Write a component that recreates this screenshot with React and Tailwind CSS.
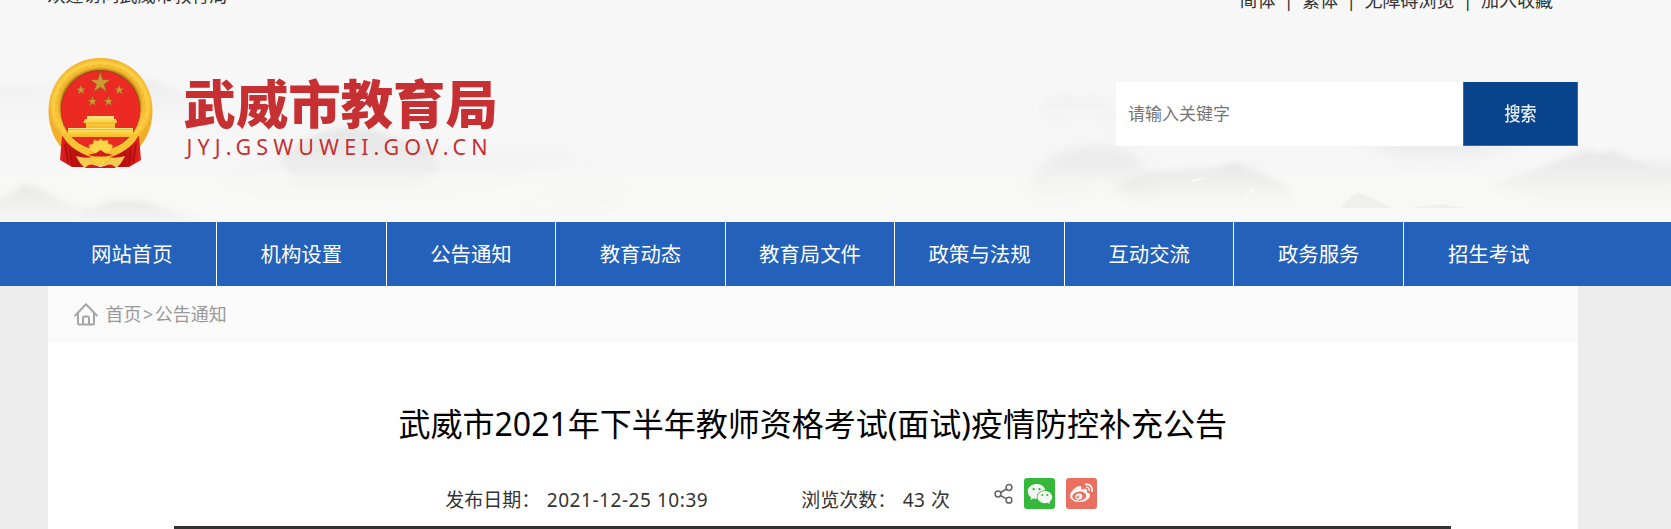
import React from 'react';
import { AiFillWechat } from 'react-icons/ai';
import { FaWeibo } from 'react-icons/fa';

const navItems = [
  '网站首页',
  '机构设置',
  '公告通知',
  '教育动态',
  '教育局文件',
  '政策与法规',
  '互动交流',
  '政务服务',
  '招生考试',
];

const topLinks = ['简体', '繁体', '无障碍浏览', '加入收藏'];

const App = () => {
  return (
    <div className="h-[529px] w-full overflow-hidden bg-[#ededed] font-['Noto_Sans','Noto_Sans_CJK_SC',sans-serif] text-[#333]">
      <Header />
      <NavBar />
      <main className="ml-[47.5px] h-[243px] w-[1530.5px] bg-white">
        <Breadcrumb />
        <Article />
      </main>
    </div>
  );
};

const Header = () => (
  <header className="relative h-[222px] overflow-hidden bg-[#f7f7f7]">
    <Mountains />
    <div className="relative ml-[47.5px] w-[1530.5px]">
      {/* Top strip, partly scrolled out of view */}
      <div className="-mt-4 flex h-8 justify-between text-[18px] leading-8">
        <p className="-mt-[5px]">欢迎访问武威市教育局</p>
        <ul className="mr-[25px] flex">
          {topLinks.map((link, index) => (
            <li key={link} className="flex">
              {index > 0 && <span className="w-[26.5px] text-center">|</span>}
              <a>{link}</a>
            </li>
          ))}
        </ul>
      </div>

      <div className="flex items-start justify-between">
        <div className="flex pt-[42px]">
          <Emblem />
          <div className="ml-[31px] pt-[19px] text-[#c73032]">
            <h1 className="text-[52.4px] leading-[54px] font-black whitespace-nowrap">武威市教育局</h1>
            <p className="mt-[3px] ml-[3px] text-[21.5px] leading-[26px] tracking-[5.1px] whitespace-nowrap">
              JYJ.GSWUWEI.GOV.CN
            </p>
          </div>
        </div>

        <form className="mt-[66px] flex h-16">
          <input
            type="text"
            placeholder="请输入关键字"
            className="w-[347px] bg-white px-[12px] text-[17px] outline-none placeholder:text-[#757575]"
          />
          <button
            type="button"
            className="w-[115px] border border-t-0 border-[#3a69a6] bg-[#09438b] text-[16px] font-medium text-[#e4ecf6]"
          >
            <span className="inline-block scale-y-120">搜索</span>
          </button>
        </form>
      </div>
    </div>
  </header>
);

const NavBar = () => (
  <nav className="h-16 bg-[#2461ba] pl-[47.5px]">
    <ul className="flex h-full">
      {navItems.map((item) => (
        <li
          key={item}
          className="flex w-[169.57px] items-center justify-center border-r border-white text-[20.4px] text-white last:border-r-0"
        >
          {item}
        </li>
      ))}
    </ul>
  </nav>
);

const Breadcrumb = () => (
  <div className="flex h-[57px] items-center bg-[#fafafa] pb-[2px] pl-[26px] text-[18px] text-[#999]">
    <HomeIcon />
    <span className="ml-[8px] leading-6">首页</span>
    <span className="mx-[1.5px] leading-6">&gt;</span>
    <span className="leading-6">公告通知</span>
  </div>
);

const Article = () => (
  <article className="flex flex-col items-center pt-[59px]">
    <h2 className="text-[32px] leading-[44px] whitespace-nowrap text-black">
      武威市2021年下半年教师资格考试(面试)疫情防控补充公告
    </h2>
    <div className="mt-[32px] flex h-[51px] w-[1277px] border-b-3 border-[#333] pl-[271px] text-[19px] leading-[44px] whitespace-nowrap">
      <span className="w-[101.5px]">发布日期：</span>
      <span className="w-[254.5px] tracking-[0.55px]">2021-12-25 10:39</span>
      <span className="w-[101.5px]">浏览次数：</span>
      <span className="w-[91.5px] tracking-[0.5px]">43 次</span>
      <div className="flex h-[31px] items-center">
        <ShareIcon />
        <span className="ml-[11px] flex size-[31px] items-center justify-center rounded-[3px] bg-[#35b83c] text-[#f4f6f4]">
          <AiFillWechat size={28} />
        </span>
        <span className="ml-[11px] flex size-[31px] items-center justify-center rounded-[3px] bg-[#ea6f60] text-[#f8f4f3]">
          <FaWeibo size={23} />
        </span>
      </div>
    </div>
  </article>
);

const HomeIcon = () => (
  <svg className="h-[24px] w-[24px]" viewBox="0 0 24 24" fill="none" stroke="#a6a6a6" strokeWidth="2" strokeLinejoin="round" strokeLinecap="round">
    <path d="M1.2 13.5 12 2.2l10.8 11.3" />
    <path d="M4 11.5V21q0 1.6 1.6 1.6h12.8q1.6 0 1.6-1.6v-9.5" />
    <path d="M9 22v-6q0-1.5 1.5-1.5h3q1.5 0 1.5 1.5v6" />
  </svg>
);

const ShareIcon = () => (
  <svg className="h-[21px] w-[19px]" viewBox="0 0 19 21" fill="none" stroke="#666" strokeWidth="1.5">
    <circle cx="4" cy="11" r="2.9" />
    <circle cx="15" cy="4.5" r="2.9" />
    <circle cx="15" cy="17.2" r="2.9" />
    <path d="M6.5 9.5 12.5 6M6.5 12.5l6 3.3" />
  </svg>
);

const Star = ({ x, y, r }) => (
  <path
    transform={`translate(${x} ${y}) scale(${r})`}
    d="M0-1 .23-.31.95-.31.36.12.59.81 0 .38-.59.81-.36.12-.95-.31-.23-.31Z"
    fill="#cf9a34"
    stroke="#96601c"
    strokeWidth="0.08"
  />
);

const Emblem = () => (
  <svg className="h-[111px] w-[105px]" viewBox="0 0 105 111">
    <defs>
      <radialGradient id="ring" cx="0.5" cy="0.5" r="0.5">
        <stop offset="0.74" stopColor="#a9741a" />
        <stop offset="0.8" stopColor="#f0b32c" />
        <stop offset="0.9" stopColor="#fdd143" />
        <stop offset="1" stopColor="#f1ae2b" />
      </radialGradient>
      <linearGradient id="gold" x1="0" y1="0" x2="0" y2="1">
        <stop offset="0" stopColor="#ffe98a" />
        <stop offset="0.5" stopColor="#fdd23e" />
        <stop offset="1" stopColor="#f2b92c" />
      </linearGradient>
      <linearGradient id="drape" x1="0" y1="0" x2="1" y2="0">
        <stop offset="0" stopColor="#e3201d" />
        <stop offset="0.5" stopColor="#b90f10" />
        <stop offset="1" stopColor="#e8221f" />
      </linearGradient>
    </defs>
    {/* Wheat ring */}
    <path d="M52.5 0C82 0 104.500 23 104.500 53c0 18-8 33-19 42H19C8 86 .5 71 .5 53 .5 23 23 0 52.500 0Z" fill="url(#ring)" />
    <circle cx="52.5" cy="52" r="45" fill="none" stroke="#e0a026" strokeWidth="1" strokeDasharray="3 4" opacity="0.5" />
    <circle cx="52.5" cy="52" r="39.5" fill="#ed2924" stroke="#9b3e14" strokeWidth="0.8" />
    <Star x={52.3} y={25} r={11} />
    <Star x={33} y={32} r={5.2} />
    <Star x={71.3} y={32} r={5.2} />
    <Star x={44.5} y={43.5} r={5.2} />
    <Star x={60.5} y={43.5} r={5.2} />
    {/* Gate */}
    <path d="M39 58h27v3h2l1 4h-2v5H38v-5h-3l2-4h2Z" fill="url(#gold)" />
    <path d="M20 70h65v9H20Z" fill="url(#gold)" />
    <path d="M36 65h32M20 71.5h65" stroke="#e1a32c" strokeWidth="0.7" />
    {/* Drapes */}
    <path d="M14 78 34 92 46 97v12H24L12 102Z" fill="url(#drape)" />
    <path d="M91 78 71 92 59 97v12h22l12-7Z" fill="url(#drape)" />
    {/* Lower ring and cogwheel */}
    <path d="M14 76q3-2 6 1 9 11 22 14l4 4h13l4-4q13-3 22-14 3-3 6-1-6 15-28 23l-10 2-10-2Q20 91 14 76Z" fill="#f8c233" />
    <path d="M17 86l3 18M22 91l2 16M88 86l-3 18M83 91l-2 16" stroke="#a80f10" strokeWidth="1.6" />
    <path d="M28 98q10 3 17 1l15 0q7 2 17-1-3 7-9 12l-8-3H45l-8 3q-6-5-9-12Z" fill="#f5cb52" />
    <path d="M42 93l-1-6 4-1 1-4 4 1 2.500-2 3 2 4-1 1 4 4 1-1 6-11 5Z" fill="#fdd548" stroke="#e2a128" strokeWidth="0.5" />
    <path d="M40 97l8-2 4.500-3 4.500 3 8 2-7 1.500H47Z" fill="#d51c1a" />
    <path d="M43 99h19l-1 4-4 2-2 2-3 .5-3-.5-2-2-4-2Z" fill="#fbd03f" stroke="#e2a128" strokeWidth="0.5" />
    <path d="M37 110q4-5 9-3l6.500 2 6.500-2q5-2 9 3Z" fill="#d51c1a" />
  </svg>
);

// Ink-wash mountains behind the header
const Mountains = () => (
  <svg className="absolute inset-0 h-full w-full" viewBox="0 0 1671 222" preserveAspectRatio="none">
    <defs>
      <linearGradient id="ink" x1="0" y1="0" x2="0" y2="1">
        <stop offset="0" stopColor="#777" stopOpacity="0.13" />
        <stop offset="0.5" stopColor="#888" stopOpacity="0.07" />
        <stop offset="1" stopColor="#999" stopOpacity="0" />
      </linearGradient>
      <linearGradient id="mist" x1="0" y1="0" x2="0" y2="1">
        <stop offset="0" stopColor="#888" stopOpacity="0.05" />
        <stop offset="1" stopColor="#aaa" stopOpacity="0" />
      </linearGradient>
      <filter id="soft" x="-10%" y="-20%" width="120%" height="140%">
        <feGaussianBlur stdDeviation="3" />
      </filter>
      <filter id="softer" x="-10%" y="-30%" width="120%" height="160%">
        <feGaussianBlur stdDeviation="7" />
      </filter>
    </defs>
    <path d="M0 172h1671v50H0Z" fill="#f8f8f6" />
    <g filter="url(#soft)">
      <path d="M-20 84 25 84 50 82 90 78 140 76 165 84 200 98 235 112 250 138-20 136Z" fill="url(#mist)" />
      <path d="M130 80 148 78 175 90 205 105 230 118 200 122 150 118Z" fill="url(#mist)" />
      <path d="M280 158 300 142 322 131 345 127 372 129 395 138 430 146 440 170 400 195 350 200 300 190Z" fill="url(#ink)" />
      <path d="M-20 206 10 194 24 184 38 188 60 200 85 208 90 226H-20Z" fill="url(#ink)" />
      <path d="M85 210 115 200 145 202 180 213 210 226H80Z" fill="url(#ink)" />
      <path d="M1035 110 1050 96 1067 90 1080 98 1095 92 1115 105 1150 125 1170 150H1120L1090 118 1050 130Z" fill="url(#mist)" />
      <path d="M1140 176 1160 171 1215 168 1235 163 1260 172 1285 184 1300 206H1140L1110 188Z" fill="url(#ink)" />
      <path d="M1215 165 1255 159 1280 168 1300 172Z" fill="url(#mist)" />
      <path d="M1490 186 1520 174 1550 164 1570 156 1590 150 1600 154 1612 150 1630 160 1650 166 1690 172V206H1590L1540 200Z" fill="url(#ink)" />
      <path d="M1615 162 1650 154 1690 157V185Z" fill="url(#mist)" />
    </g>
    <g filter="url(#softer)">
      <path d="M215 175 260 156 320 144 430 145 500 150 560 148 590 162 540 172 480 180 420 196 350 200 280 196Z" fill="url(#mist)" />
      <path d="M510 212 560 194 600 184 620 180 610 205 570 214Z" fill="url(#mist)" />
      <path d="M1030 180 1050 158 1070 150 1100 148 1130 152 1150 172 1150 200 1100 178 1065 200 1030 200Z" fill="url(#ink)" />
      <path d="M1355 140H1525L1490 154 1440 166 1400 158Z" fill="url(#ink)" />
    </g>
    <path d="M1340 208 1352 196 1358 193 1370 197 1392 208ZM1410 208 1440 204 1465 208Z" fill="#888" fillOpacity="0.08" />
    <path d="M1190 182q8-5 13-4-4 4-13 4ZM1243 198q5-8 12-11 1 6-6 7l-5 6Z" fill="#f8f8f6" />
  </svg>
);

export default App;
